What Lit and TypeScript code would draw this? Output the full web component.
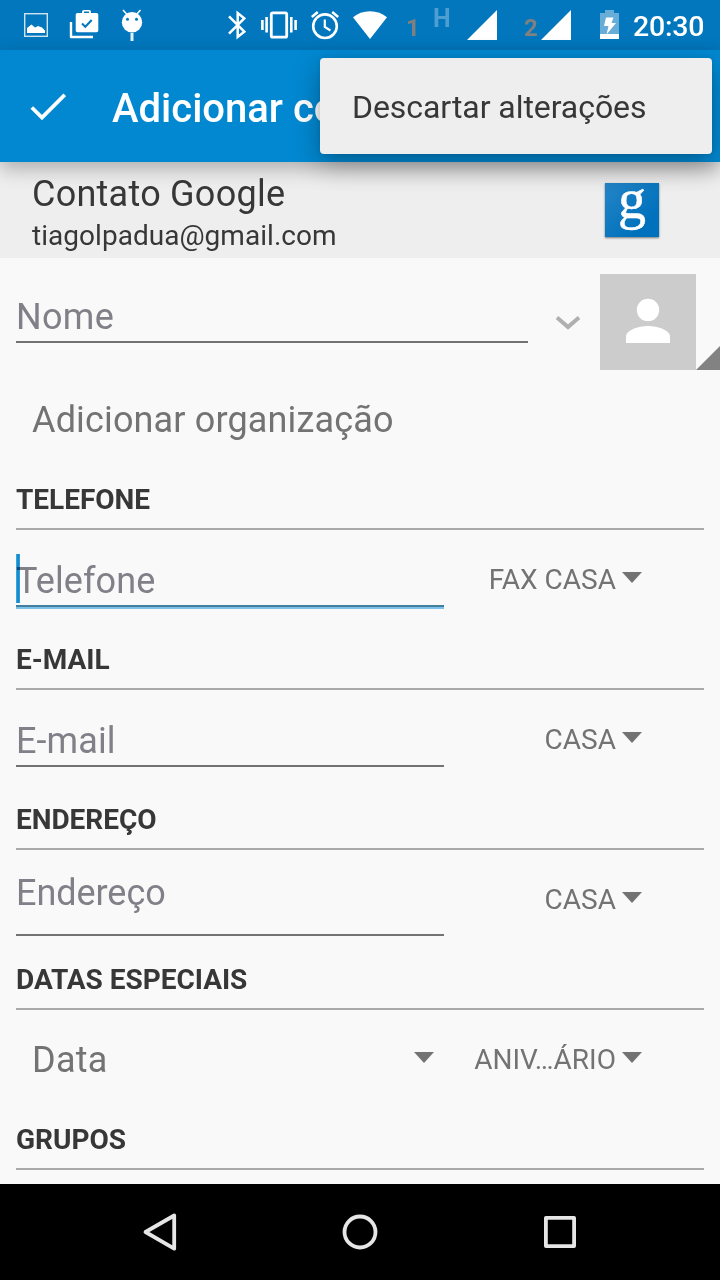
import { LitElement, html, svg, css, nothing } from "lit";
import { customElement, property } from "lit/decorators.js";

/* Icons keep the coordinates of the 720px bar they sit in. */
const barIcon = (x: number, w: number, shape: unknown) => html`
  <svg width=${w} height="50" viewBox="${x} 0 ${w} 50" aria-hidden="true">${shape}</svg>`;

@customElement("status-bar")
class StatusBar extends LitElement {
  static styles = css`
    :host { display: block; background: #0277bd; color: #fff; }
    .bar { display: flex; height: 50px; align-items: flex-start; }
    svg { display: block; flex: none; overflow: visible; }
    .group { display: flex; }
    .left { padding-left: 24px; gap: 22px; }
    .right { margin-left: auto; padding-right: 16px; }
    .g14 { margin-left: 14px; }
    .g15 { margin-left: 15px; }
    .g16 { margin-left: 16px; }
    .g29 { margin-left: 29px; }
    .sim { width: 14px; margin-left: 19px; font: 700 24px/28px Roboto, sans-serif; color: #808080; padding-top: 14px; }
    .sim.two { width: 16px; margin-left: 27px; margin-right: 1px; }
    .net { width: 18px; margin-left: 13px; font: 700 25px/28px Roboto, sans-serif; color: #4e9fd1; padding-top: 5px; }
    .clock { width: 71px; margin-left: 14px; font: 500 28.500px/34px Roboto, sans-serif; letter-spacing: -.2px; padding-top: 10px; }
  `;
  render() {
    return html`<div class="bar">
      <div class="group left">
        ${barIcon(24, 24, svg`<rect x="24.7" y="13.7" width="22.6" height="22.6" fill="none" stroke="#cfe3f1" stroke-width="1.4"/><path d="M27 33V28l4.5-3.5 3.5 3 3-1.5 4 1.5 3 3V33z" fill="#fff"/>`)}
        ${barIcon(70, 29, svg`<path d="M71 22V37H93" fill="none" stroke="#fff" stroke-width="2.4" stroke-linejoin="round"/><path fill="#fff" fill-rule="evenodd" d="M82 13v-1q0-2 2-2h5q2 0 2 2v1h5.500q1.800 0 1.800 1.800V30.500q0 1.800-1.800 1.800H77.500q-1.800 0-1.800-1.800V14.800q0-1.800 1.800-1.800zm2 0h5v-1.500h-5z"/><path d="M82 23.500l3.300 3.300 6.400-6.800" fill="none" stroke="#0277bd" stroke-width="2"/>`)}
        ${barIcon(121, 21, svg`<path d="M123 10l4 4.500M140.500 10l-4 4.500" stroke="#fff" stroke-width="1.500"/><circle cx="132" cy="22.300" r="10.200" fill="#fff"/><circle cx="127.500" cy="19.200" r="1.500" fill="#0277bd"/><circle cx="136.500" cy="19.200" r="1.500" fill="#0277bd"/><path d="M132 33v8" stroke="#e4f0f8" stroke-width="3"/>`)}
      </div>
      <div class="group right">
        ${barIcon(228, 18, svg`<path d="M229 16.300L244.300 31.700 237.700 37V13l6.600 5.300L229 33.700" fill="none" stroke="#fff" stroke-width="2.500"/>`)}
        <span class="g15">${barIcon(261, 36, svg`<rect x="271.300" y="12.800" width="15.400" height="24.400" rx="1.500" fill="none" stroke="#fff" stroke-width="2.800"/><path d="M262.400 20v10M295.600 20v10M266.600 17v15.500M291.300 17v15.500" stroke="#fff" stroke-width="2.600"/>`)}</span>
        <span class="g14">${barIcon(311, 28, svg`<circle cx="325" cy="26.200" r="11.800" fill="none" stroke="#fff" stroke-width="2.600"/><path d="M311.800 17l6-5M338.200 17l-6-5" stroke="#fff" stroke-width="2.500"/><path d="M324.800 19.500v7.300l5.600 3.700" fill="none" stroke="#fff" stroke-width="2.200"/>`)}</span>
        <span class="g14">${barIcon(353, 34, svg`<path d="M353 17.300Q360 11.200 370 11.200T387 17.300L370 39z" fill="#fff"/>`)}</span>
        <span class="sim">1</span>
        <span class="net">H</span>
        <span class="g16">${barIcon(467, 30, svg`<path d="M467 40h30V10z" fill="#fff"/>`)}</span>
        <span class="sim two">2</span>
        ${barIcon(541, 30, svg`<path d="M541 40h30V10z" fill="#fff"/>`)}
        <span class="g29">${barIcon(600, 19, svg`<path d="M600 13h5v-3h9v3h5v26h-19z" fill="#67add8"/><path d="M600 34h19v5h-19z" fill="#fff"/><path d="M606 17.500h7.500l-2 5.500h4.500l-9.500 11.500 2-8.500h-4.500z" fill="#fff"/>`)}</span>
        <span class="clock">20:30</span>
      </div>
    </div>`;
  }
}

@customElement("form-section")
class FormSection extends LitElement {
  @property() heading = "";
  @property() hint = "";
  @property() kind = "";
  @property() variant = "";

  static styles = css`
    :host { display: block; font-family: Roboto, sans-serif; }
    h2 { box-sizing: border-box; height: 80px; margin: 0 16px; padding-top: 34px; border-bottom: 2px solid #a9a9a9; font-size: 28px; line-height: 32px; font-weight: 700; color: #373737; letter-spacing: -.03px; }
    .row { display: flex; height: 80px; padding-left: 16px; }
    .field { box-sizing: border-box; position: relative; width: 428px; height: 77px; padding-top: 30px; border-bottom: 2px solid #737373; font-size: 36px; line-height: 42px; letter-spacing: .08px; color: #817f87; }
    .focused { height: 79px; border-bottom: 2px solid #7dc1e8; box-shadow: inset 0 -2px #437f9f; }
    .tall { height: 86px; padding-top: 22px; letter-spacing: -.05px; }
    .plain { display: flex; justify-content: space-between; border: 0; padding-top: 29px; padding-left: 16px; padding-right: 10px; color: #737373; letter-spacing: .25px; }
    .caret { position: absolute; left: 0; top: 24px; width: 4px; height: 49px; background: linear-gradient(90deg, #52b0e6, #0288d1 50%, #40a5de); mix-blend-mode: multiply; }
    .kind { display: flex; width: 198px; justify-content: flex-end; gap: 6px; padding-top: 34px; font-size: 28px; line-height: 32px; color: #737373; white-space: nowrap; }
    .arrow { flex: none; width: 20px; height: 11px; margin-top: 8px; background: #737373; clip-path: polygon(0 0, 100% 0, 50% 100%); }
    .plain .arrow { margin-top: 13px; }
  `;
  render() {
    return html`<h2>${this.heading}</h2>
      ${this.hint
        ? html`<div class="row">
            <div class="field ${this.variant}">
              <span>${this.hint}</span>
              ${this.variant === "focused" ? html`<i class="caret"></i>` : nothing}
              ${this.variant === "plain" ? html`<i class="arrow"></i>` : nothing}
            </div>
            <div class="kind"><span>${this.kind}</span><i class="arrow"></i></div>
          </div>`
        : nothing}`;
  }
}

@customElement("app-root")
class AppRoot extends LitElement {
  static styles = css`
    :host { display: flex; flex-direction: column; position: relative; width: 720px; height: 1280px; overflow: hidden; background: #f9f9f9; font-family: Roboto, sans-serif; color: #373737; }
    svg { display: block; flex: none; }
    .toolbar { position: relative; display: flex; flex: none; align-items: center; height: 112px; padding-left: 30px; background: #0288d1; color: #fff; box-shadow: 0 7px 18px rgba(0, 0, 0, .27); z-index: 1; }
    .check { margin-top: 1px; }
    .title { width: 208px; overflow: hidden; margin-left: 46px; padding-top: 5px; font-size: 40px; line-height: 48px; font-weight: 500; white-space: nowrap; }
    .menu { position: absolute; z-index: 2; left: 320px; top: 58px; width: 392px; height: 96px; box-sizing: border-box; padding: 0 32px; border-radius: 4px; background: #eee; font-size: 32px; line-height: 99px; letter-spacing: -.06px; box-shadow: 0 10px 28px rgba(0, 0, 0, .3), 0 0 5px rgba(0, 0, 0, .08); }
    .account { display: flex; flex: none; justify-content: space-between; height: 96px; padding: 0 61px 0 32px; background: #eee; }
    .who { padding-top: 11px; }
    .type { font-size: 36px; line-height: 42px; letter-spacing: .25px; }
    .mail { font-size: 28px; line-height: 34px; margin-top: 4px; letter-spacing: .03px; }
    .google { width: 54px; height: 54px; margin-top: 21px; background: linear-gradient(135deg, #2585c7, #0071bc 75%); box-shadow: 0 1px 2px rgba(0, 0, 0, .5); color: #fff; font: 56px/33px "Liberation Serif", serif; -webkit-text-stroke: .5px #fff; text-align: center; }
    .form { flex: 1; min-height: 0; overflow: hidden; }
    .name { display: flex; height: 128px; padding-left: 16px; }
    .input { box-sizing: border-box; width: 512px; height: 85px; padding-top: 38px; border-bottom: 2px solid #737373; font-size: 36px; line-height: 42px; letter-spacing: .3px; color: #817f87; }
    .chevron { margin: 58px 0 0 27px; }
    .photo { width: 96px; height: 96px; margin: 16px 0 0 19px; background: #ccc; }
    .corner { width: 24px; height: 24px; margin-top: 88px; background: #828282; clip-path: polygon(100% 0, 100% 100%, 0 100%); }
    .org { height: 64px; padding-left: 32px; font-size: 36px; line-height: 68px; letter-spacing: .15px; color: #737373; }
    .nav { display: flex; flex: none; height: 96px; background: #000; }
  `;
  render() {
    return html`
      <status-bar></status-bar>
      <header class="toolbar">
        <svg class="check" width="36" height="28" viewBox="0 0 36 28"><path d="M1.800 14.500L12 24.500 34.800 1.800" fill="none" stroke="#fff" stroke-width="3.800"/></svg>
        <span class="title">Adicionar co</span>
      </header>
      <div class="menu">Descartar alterações</div>
      <section class="account">
        <div class="who">
          <div class="type">Contato Google</div>
          <div class="mail">tiagolpadua@gmail.com</div>
        </div>
        <div class="google">g</div>
      </section>
      <main class="form">
        <div class="name">
          <div class="input">Nome</div>
          <svg class="chevron" width="26" height="16" viewBox="0 0 26 16"><path d="M2 1.500L13 11 24 1.500" fill="none" stroke="#b0b0b0" stroke-width="4"/></svg>
          <svg class="photo" viewBox="0 0 96 96"><circle cx="48" cy="36" r="11.200" fill="#fff"/><path d="M26 69v-6.500c0-6 12-10.500 22-10.500s22 4.500 22 10.500V69z" fill="#fff"/></svg>
          <i class="corner"></i>
        </div>
        <div class="org">Adicionar organização</div>
        <form-section heading="TELEFONE" hint="Telefone" kind="FAX CASA" variant="focused"></form-section>
        <form-section heading="E-MAIL" hint="E-mail" kind="CASA"></form-section>
        <form-section heading="ENDEREÇO" hint="Endereço" kind="CASA" variant="tall"></form-section>
        <form-section heading="DATAS ESPECIAIS" hint="Data" kind="ANIV…ÁRIO" variant="plain"></form-section>
        <form-section heading="GRUPOS"></form-section>
      </main>
      <nav class="nav">
        <svg width="720" height="96" viewBox="0 1184 720 96" fill="none" stroke="#e6e6e6" stroke-width="3.800" stroke-linejoin="round">
          <path d="M145.500 1232L174.200 1215.500V1248.700z"/>
          <circle cx="360" cy="1232" r="15.500"/>
          <rect x="545.900" y="1217.900" width="28.200" height="28.200"/>
        </svg>
      </nav>`;
  }
}
